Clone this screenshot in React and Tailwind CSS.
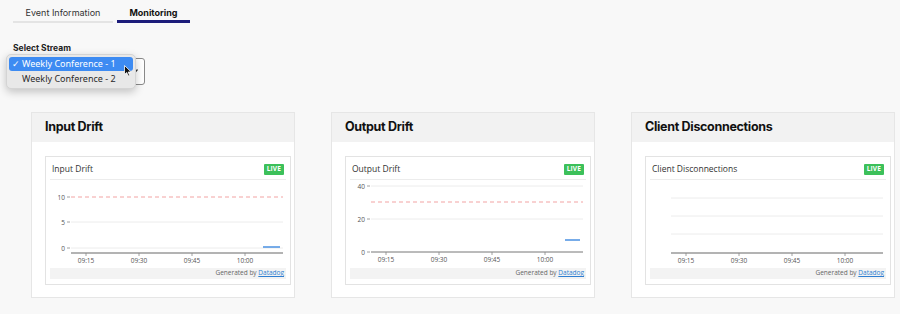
import React from "react"

const charts = [
    {
        title: "Input Drift",
        yLabels: [{ v: "10", y: 17 }, { v: "5", y: 42 }, { v: "0", y: 68 }],
        grid: [42, 68],
        dashed: 17,
        axis: 73,
        axisThick: true,
        blue: { x1: 213, x2: 230, y: 67 },
    },
    {
        title: "Output Drift",
        yLabels: [{ v: "40", y: 6 }, { v: "20", y: 39 }, { v: "0", y: 72 }],
        grid: [6, 39],
        dashed: 22,
        axis: 72,
        axisThick: false,
        blue: { x1: 215, x2: 230, y: 60 },
    },
    {
        title: "Client Disconnections",
        yLabels: [],
        grid: [18, 36, 54],
        dashed: null,
        axis: 73,
        axisThick: true,
        blue: null,
    },
]

const ticks = [
    { x: 36, t: "09:15" },
    { x: 89, t: "09:30" },
    { x: 142, t: "09:45" },
    { x: 195, t: "10:00" },
]

function Chart({ c }) {
    return (
        <svg width="235" height="88" className="block" style={{ fontFamily: "'Open Sans', sans-serif" }}>
            {c.grid.map((y) => (
                <line key={y} x1="21" x2="233" y1={y} y2={y} stroke="#ececec" strokeWidth="1" />
            ))}
            {c.dashed !== null && (
                <line x1="21" x2="233" y1={c.dashed} y2={c.dashed} stroke="#f2a3a3" strokeWidth="1" strokeDasharray="4 3" />
            )}
            {c.yLabels.map((l) => (
                <g key={l.v}>
                    <text x="15" y={l.y + 2.5} textAnchor="end" fontSize="6.5" fill="#555">{l.v}</text>
                    <line x1="17" x2="20" y1={l.y} y2={l.y} stroke="#888" strokeWidth="0.8" />
                </g>
            ))}
            <line
                x1="21" x2="233" y1={c.axis} y2={c.axis}
                stroke={c.axisThick ? "#b3b3b3" : "#777"}
                strokeWidth={c.axisThick ? 2 : 1}
            />
            {ticks.map((t) => (
                <g key={t.t}>
                    <line x1={t.x} x2={t.x} y1={c.axis} y2={c.axis + 3} stroke="#888" strokeWidth="0.8" />
                    <text x={t.x} y={c.axis + 9.5} textAnchor="middle" fontSize="6.5" fill="#555">{t.t}</text>
                </g>
            ))}
            {c.blue && (
                <line x1={c.blue.x1} x2={c.blue.x2} y1={c.blue.y} y2={c.blue.y} stroke="#4a90e2" strokeWidth="1.5" />
            )}
        </svg>
    )
}

function Card({ c }) {
    return (
        <div className="w-[264px] h-[186px] bg-white border border-[#e6e6e6] flex flex-col">
            <div className="h-[29px] bg-[#f2f2f2] flex items-center pl-[13px] text-[12.5px] font-bold text-[#111] tracking-tight">
                {c.title}
            </div>
            <div className="pl-[13px] pr-[4px] pt-[14px]">
                <div className="w-[246px] h-[129px] border border-[#e3e3e3] px-[4px] flex flex-col" style={{ fontFamily: "'Open Sans', sans-serif" }}>
                    <div className="h-[23px] pt-[3px] border-b border-[#ececec] flex items-center justify-between pl-[2px] pr-[2px]">
                        <span className="text-[8.5px] text-[#333]">{c.title}</span>
                        <span className="bg-[#3cc05a] text-white text-[6.5px] font-bold px-[3px] h-[11px] flex items-center rounded-[1px] tracking-wide">LIVE</span>
                    </div>
                    <Chart c={c} />
                    <div className="h-[11px] bg-[#f3f3f3] flex items-center justify-end pr-[2px] text-[6.5px] text-[#666]">
                        Generated by&nbsp;<span className="text-[#2f7fd1] underline">Datadog</span>
                    </div>
                </div>
            </div>
        </div>
    )
}

export default function App() {
    return (
        <div className="w-[900px] h-[314px] bg-[#f8f8f8] relative overflow-hidden" style={{ fontFamily: "Inter, sans-serif" }}>
            <div className="flex pl-[13px] pt-[6px] gap-[4px]">
                <div className="w-[100px] h-[17px] border-b-2 border-[#e4e4e4] flex justify-center text-[9px] leading-[13px] text-[#333]">Event Information</div>
                <div className="w-[73px] h-[17px] border-b-[3px] border-[#1c1c7a] flex justify-center text-[9px] leading-[13px] font-bold text-[#111]">Monitoring</div>
            </div>
            <div className="pl-[13px] pt-[19px] text-[8.5px] font-bold text-[#222]">Select Stream</div>
            <div className="ml-[13px] mt-[3px] w-[132px] h-[27px] border border-[#8a8a8a] rounded-[3px] bg-white flex items-center justify-end pr-[6px]">
                <svg width="7" height="5" viewBox="0 0 7 5"><path d="M0.5 0.5 L3.5 4 L6.5 0.5" stroke="#333" strokeWidth="1.2" fill="none" /></svg>
            </div>

            <div className="absolute left-[6px] top-[54px] w-[130px] h-[35px] rounded-[5px] bg-[#e8e8e8] border border-[#d4d4d4] shadow-[0_3px_8px_rgba(0,0,0,0.22)] p-[2px] text-[9px]" style={{ fontFamily: "'Noto Sans', sans-serif" }}>
                <div className="h-[14px] rounded-[3px] bg-[#3d8bf2] text-white flex items-center pl-[3px]">
                    <span className="w-[10px]">✓</span>Weekly Conference - 1
                </div>
                <div className="h-[15px] text-[#2a2a2a] flex items-center pl-[13px]">Weekly Conference - 2</div>
                <svg className="absolute left-[117px] top-[10px]" width="8" height="12" viewBox="0 0 8 12">
                    <path d="M0.5 0.5 L0.5 9.5 L2.7 7.5 L4.2 11 L5.6 10.4 L4.2 7 L7.2 7 Z" fill="#111" stroke="#fff" strokeWidth="0.8" />
                </svg>
            </div>

            <div className="flex pl-[31px] gap-[36px] mt-[27px]">
                {charts.map((c) => (
                    <Card key={c.title} c={c} />
                ))}
            </div>
        </div>
    )
}
